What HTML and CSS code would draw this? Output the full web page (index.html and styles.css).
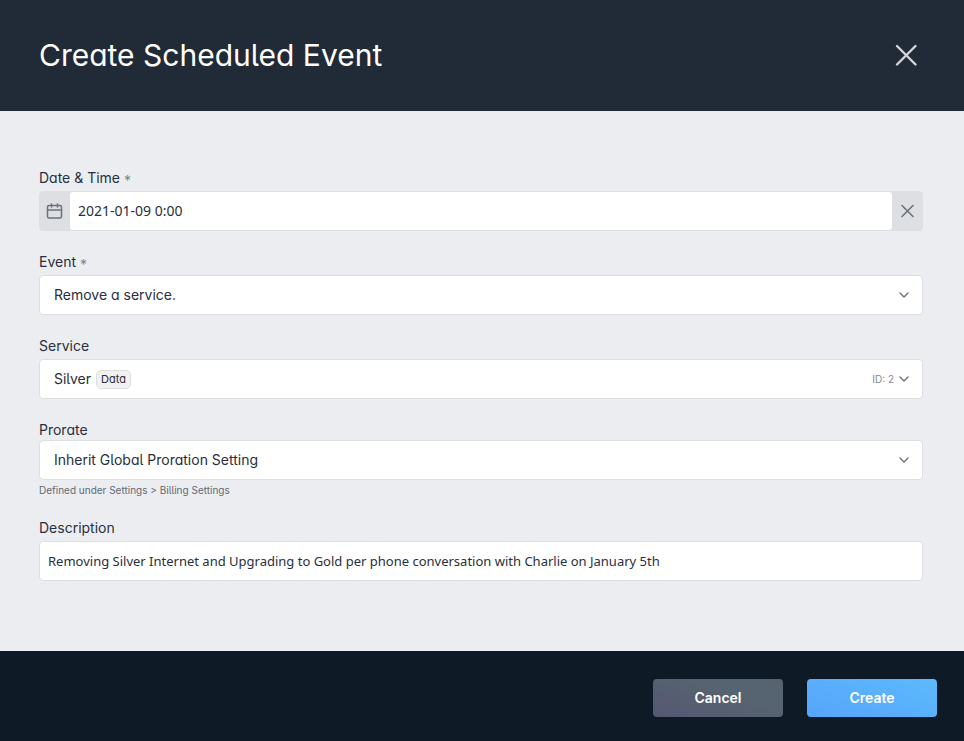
FILE: index.html
```html
<!DOCTYPE html>
<html lang="en">
<head>
<meta charset="utf-8">
<meta name="viewport" content="width=device-width, initial-scale=1">
<title>Create Scheduled Event</title>
<link rel="stylesheet" href="styles.css">
</head>
<body>
<form class="dialog">
  <header class="dialog-header">
    <h1 class="dialog-title">Create Scheduled Event</h1>
    <button type="button" class="close" aria-label="Close">
      <svg width="24" height="24" viewBox="0 0 24 24" fill="none" stroke="currentColor" stroke-width="2.4" stroke-linecap="round"><path d="M3 3l18.500 18.500M21.500 3L3 21.500"/></svg>
    </button>
  </header>

  <main class="dialog-body">
    <div class="field">
      <label class="label" for="date">Date &amp; Time <span class="required">*</span></label>
      <div class="date-group">
        <span class="addon">
          <svg width="18" height="18" viewBox="0 0 18 18" fill="none" stroke="currentColor" stroke-width="1.5" stroke-linecap="round" stroke-linejoin="round"><rect x="1.500" y="3.500" width="14" height="12.500" rx="1.500"/><path d="M1.500 8h14M5.500 2v3M11.500 2v3"/></svg>
        </span>
        <input class="date-input" id="date" type="text" value="2021-01-09 0:00">
        <button type="button" class="addon" aria-label="Clear date">
          <svg width="16" height="16" viewBox="0 0 16 16" fill="none" stroke="currentColor" stroke-width="1.600" stroke-linecap="round"><path d="M3 2.500l11 11M14 2.500l-11 11"/></svg>
        </button>
      </div>
    </div>

    <div class="field">
      <label class="label" for="event">Event <span class="required">*</span></label>
      <div class="select-wrap">
        <select class="select" id="event"><option>Remove a service.</option></select>
        <svg class="chevron" width="10" height="10" viewBox="0 0 10 10"><path d="M1 3l4 4 4-4"/></svg>
      </div>
    </div>

    <div class="field">
      <label class="label" for="service">Service</label>
      <div class="select-wrap">
        <select class="select" id="service"><option>Silver</option></select>
        <span class="badge">Data</span>
        <span class="service-id">ID: 2</span>
        <svg class="chevron" width="10" height="10" viewBox="0 0 10 10"><path d="M1 3l4 4 4-4"/></svg>
      </div>
    </div>

    <div class="field field-tight">
      <label class="label" for="prorate">Prorate</label>
      <div class="select-wrap">
        <select class="select" id="prorate" aria-describedby="prorate-help"><option>Inherit Global Proration Setting</option></select>
        <svg class="chevron" width="10" height="10" viewBox="0 0 10 10"><path d="M1 3l4 4 4-4"/></svg>
      </div>
      <p class="help" id="prorate-help">Defined under Settings &gt; Billing Settings</p>
    </div>

    <div class="field">
      <label class="label" for="description">Description</label>
      <input class="text-input" id="description" type="text" value="Removing Silver Internet and Upgrading to Gold per phone conversation with Charlie on January 5th">
    </div>
  </main>

  <footer class="dialog-footer">
    <button type="button" class="button button-cancel">Cancel</button>
    <button type="submit" class="button button-create">Create</button>
  </footer>
</form>
</body>
</html>
```
FILE: styles.css
```css
* {
  box-sizing: border-box;
}

body {
  margin: 0;
  font-family: Inter, "Liberation Sans", sans-serif;
  font-size: 14px;
  line-height: 20px;
  color: #282f3d;
  background: #ecedf1;
}

button,
input,
select {
  font: inherit;
  color: inherit;
}

button {
  border: 0;
  cursor: pointer;
}

svg {
  display: block;
}

.dialog {
  display: flex;
  flex-direction: column;
  min-height: 100vh;
  font-feature-settings: "cv05", "cv11";
}

.dialog-header {
  display: flex;
  align-items: center;
  justify-content: space-between;
  padding: 32px 46px 33px 39px;
  color: #fff;
  background: #212b38;
}

.dialog-title {
  margin: 0;
  font-size: 30px;
  font-weight: 400;
  line-height: 46px;
}

.close {
  padding: 0;
  color: #d3d5d8;
  background: none;
}

.dialog-body {
  display: flex;
  flex: 1;
  flex-direction: column;
  gap: 21px;
  padding: 57px 41px 70px 39px;
}

.field {
  display: flex;
  flex-direction: column;
  gap: 3px;
}

.field-tight {
  gap: 0;
}

.required {
  line-height: 1;
  vertical-align: -3px;
  color: #7e838d;
}

.date-group,
.select,
.text-input {
  width: 100%;
  height: 40px;
  border: 1px solid #dddfe4;
  border-radius: 4px;
  background: #fff;
}

.date-group {
  display: flex;
  background: #dddfe3;
}

.addon {
  display: flex;
  flex: none;
  align-items: center;
  justify-content: center;
  width: 30px;
  padding: 0;
  color: #6c727d;
  background: none;
}

.date-input {
  flex: 1;
  min-width: 0;
  padding: 0 8px;
  border: 0;
  border-radius: 3px;
  background: #fff;
}

.date-input,
.text-input {
  font-family: "Noto Sans", "Open Sans", sans-serif;
}

.text-input {
  padding: 0 8px;
  font-size: 13px;
}

.select-wrap {
  position: relative;
}

.select {
  display: block;
  padding: 0 40px 0 14px;
  appearance: none;
  font-feature-settings: inherit;
}

.chevron {
  position: absolute;
  top: 15px;
  right: 14px;
  fill: none;
  stroke: #6c727d;
  stroke-width: 1.4;
  stroke-linecap: round;
  stroke-linejoin: round;
  pointer-events: none;
}

.badge {
  position: absolute;
  top: 11px;
  left: 57px;
  padding: 0 4px;
  border: 1px solid #dddddf;
  border-radius: 5px;
  font-size: 11px;
  line-height: 17px;
  background: #f1f1f2;
  pointer-events: none;
}

.service-id {
  position: absolute;
  top: 10px;
  right: 29px;
  font-size: 10px;
  color: #85898f;
  pointer-events: none;
}

.help {
  margin: 0;
  padding-top: 3px;
  font-size: 10px;
  line-height: 14px;
  color: #636975;
}

.dialog-footer {
  display: flex;
  justify-content: flex-end;
  gap: 24px;
  padding: 28px 27px 24px;
  background: #0e1a26;
}

.button {
  width: 130px;
  height: 38px;
  padding: 0;
  border-radius: 4px;
  font-weight: 600;
  font-feature-settings: normal;
  color: #fff;
}

.button-cancel {
  background: linear-gradient(20deg, #565773, #566370 60%);
}

.button-create {
  background: linear-gradient(20deg, #57a4fb, #5cbafd);
}
```
